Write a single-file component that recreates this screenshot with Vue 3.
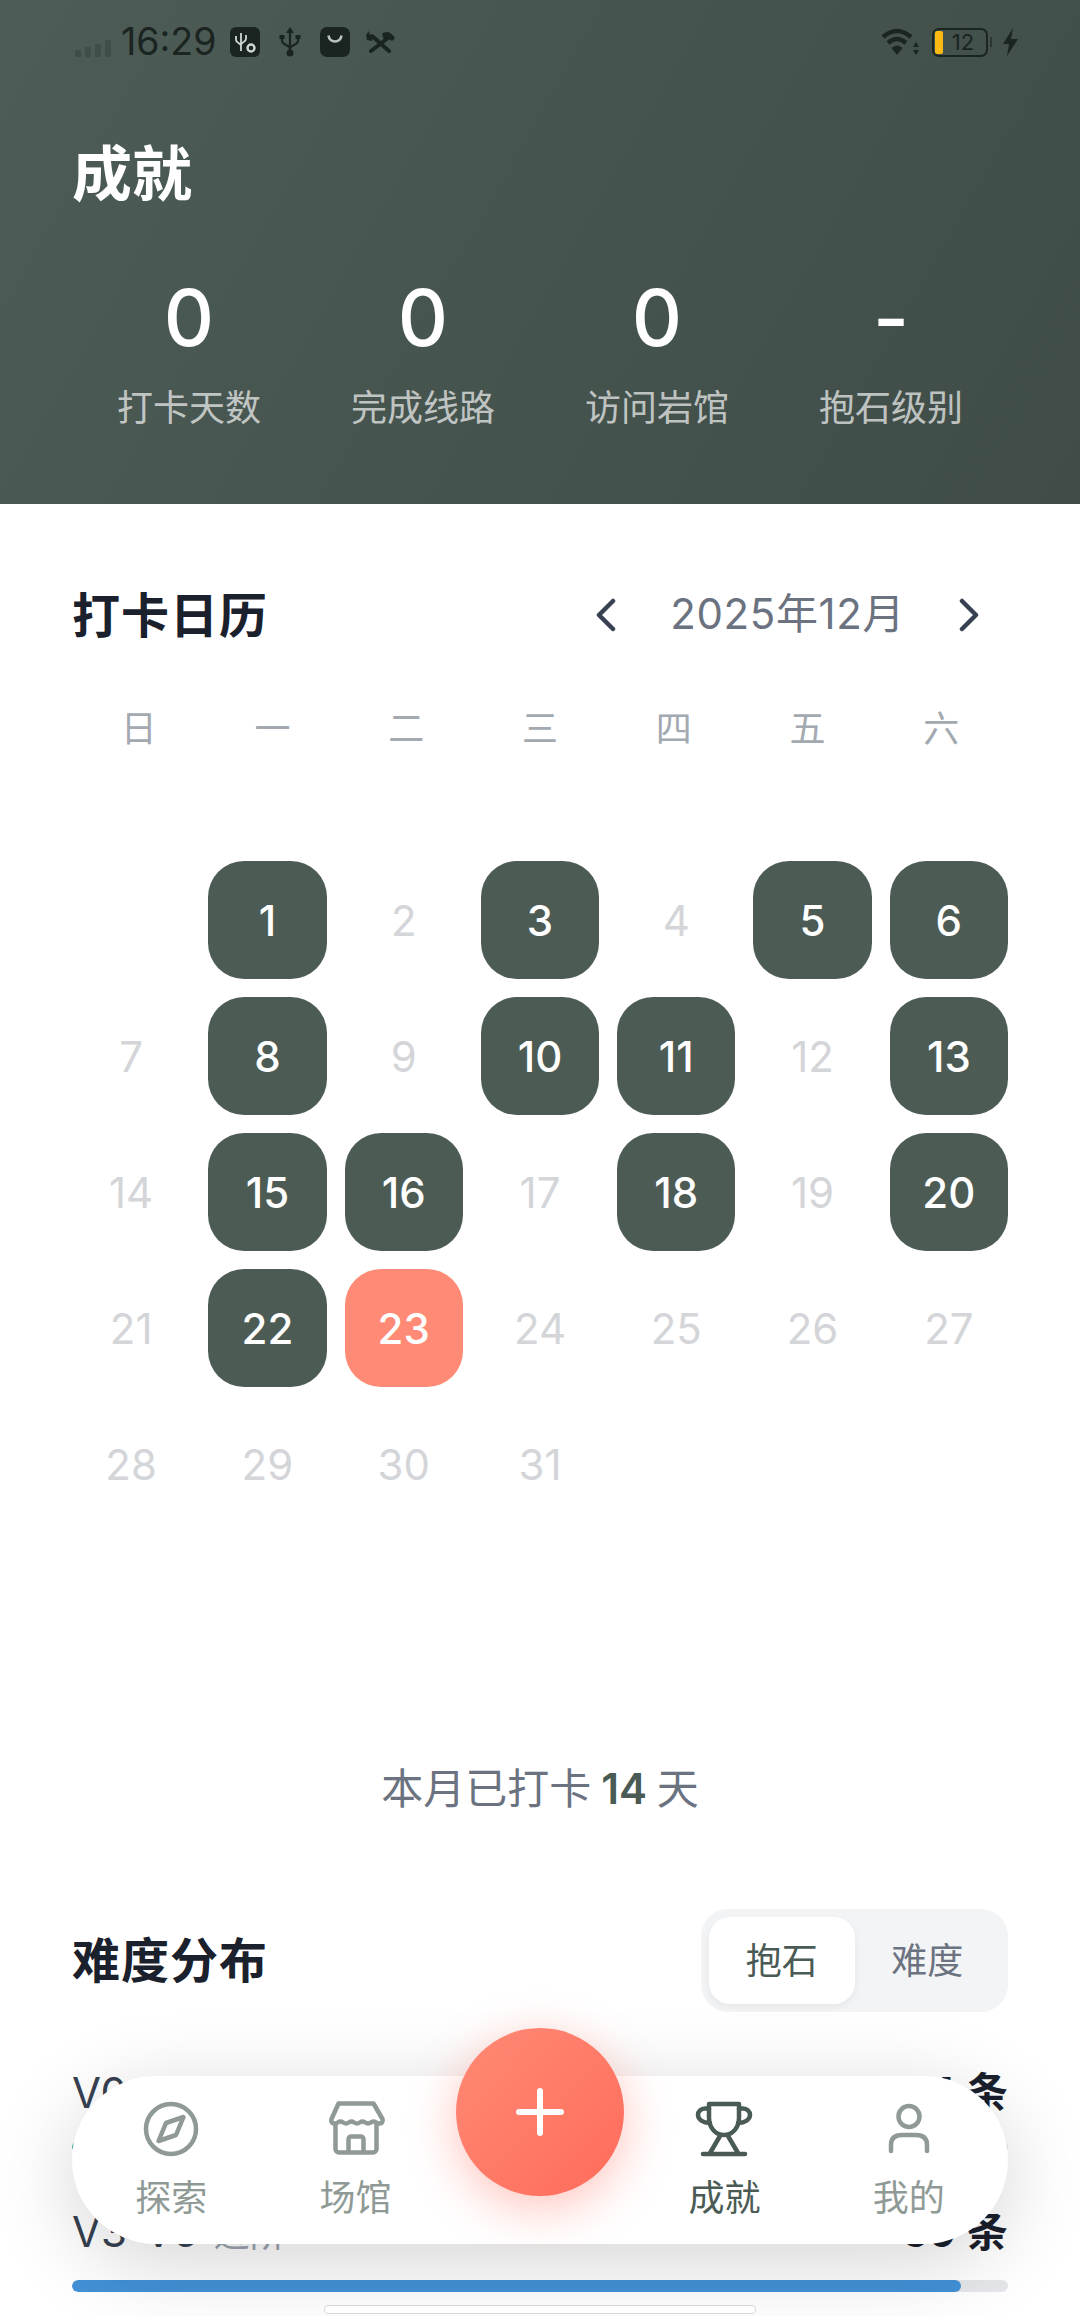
<script setup>
const stats = [
  { value: '0', label: '打卡天数' },
  { value: '0', label: '完成线路' },
  { value: '0', label: '访问岩馆' },
  { value: '-', label: '抱石级别' }
]
const weekdays = ['日', '一', '二', '三', '四', '五', '六']
const checked = [1, 3, 5, 6, 8, 10, 11, 13, 15, 16, 18, 20, 22]
const today = 23
const days = Array.from({ length: 31 }, (_, i) => i + 1)
const grades = [
  { range: 'V0-V2', name: '入门', count: '34 条', width: 40, color: '#38b2a0' },
  { range: 'V3-V5', name: '进阶', count: '59 条', width: 95, color: '#4391d8' }
]
</script>

<template>
  <div class="page">
    <header class="hero">
      <div class="status">
        <svg class="signal" width="36" height="17" viewBox="0 0 36 17">
          <rect x="0" y="10" width="6" height="7" rx="1" />
          <rect x="10" y="7" width="6" height="10" rx="1" />
          <rect x="20" y="4" width="6" height="13" rx="1" />
          <rect x="30" y="0" width="6" height="17" rx="1" />
        </svg>
        <span class="time">16:29</span>
        <svg class="app-box" width="30" height="30" viewBox="0 0 30 30">
          <rect width="30" height="30" rx="6" fill="#1a2421" />
          <path d="M11 6v18M6 9v4c0 3 5 3 5 6M16 8v4c0 3-5 3-5 6" fill="none" stroke="#cfd6d2" stroke-width="1.8" />
          <circle cx="21" cy="21" r="3.5" fill="none" stroke="#cfd6d2" stroke-width="2.4" />
        </svg>
        <svg class="usb" width="22" height="30" viewBox="0 0 22 30">
          <path d="M11 4v21M3 11v3c0 4 8 4 8 8M19 11v3c0 4-8 4-8 8" fill="none" stroke="#1a2421" stroke-width="2.2" />
          <path d="M11 0l4 6H7z" fill="#1a2421" />
          <circle cx="11" cy="26" r="3.5" fill="#1a2421" />
          <rect x="0.5" y="8" width="5" height="4" fill="#1a2421" />
          <rect x="16.5" y="8" width="5" height="4" fill="#1a2421" />
        </svg>
        <svg class="usb" width="30" height="30" viewBox="0 0 30 30">
          <rect width="30" height="30" rx="7" fill="#1a2421" />
          <path d="M8.5 8.5c1 8 12 8 13 0" fill="none" stroke="#b9c2bd" stroke-width="2.6" />
        </svg>
        <svg class="tools" width="30" height="22" viewBox="0 0 30 22">
          <path d="M7 5l17 15M23 7L6 20" fill="none" stroke="#1a2421" stroke-width="4" stroke-linecap="round" />
          <path d="M1 4l3-4 1 4 3 1-1 5-5-1z" fill="#1a2421" />
          <path d="M17 3c4-3 8-3 13 4l-3 3-5-3-3 2z" fill="#1a2421" />
        </svg>
        <span class="status-gap"></span>
        <svg width="38" height="30" viewBox="0 0 38 30">
          <path d="M2 10Q16-2 30 10M7 16Q16 8 25 16" fill="none" stroke="#1a2421" stroke-width="4.5" />
          <path d="M10.5 21Q16 16 21.5 21L16 28z" fill="#1a2421" />
          <path d="M35 15l3 5h-6zM35 28l3-5h-6z" fill="#1a2421" />
        </svg>
        <div class="battery">
          <span class="charge"></span>
          <span class="level">12</span>
        </div>
        <svg class="bolt" width="15" height="28" viewBox="0 0 15 28">
          <path d="M10 0L0 16h6l-2 12L15 11H8z" fill="#1a2421" />
        </svg>
      </div>
      <h1 class="hero-title">成就</h1>
      <div class="stats">
        <div v-for="s in stats" :key="s.label" class="stat">
          <div class="stat-value">{{ s.value }}</div>
          <div class="stat-label">{{ s.label }}</div>
        </div>
      </div>
    </header>

    <main class="content">
      <section class="cal-head">
        <h2 class="section-title">打卡日历</h2>
        <div class="month-nav">
          <svg width="20" height="36" viewBox="0 0 20 36"><path d="M17 4L3 18l14 14" /></svg>
          <span class="month">2025年12月</span>
          <svg width="20" height="36" viewBox="0 0 20 36"><path d="M3 4l14 14L3 32" /></svg>
        </div>
      </section>

      <div class="weekdays">
        <span v-for="w in weekdays" :key="w">{{ w }}</span>
      </div>

      <div class="days">
        <div class="day-blank"></div>
        <div
          v-for="d in days"
          :key="d"
          class="day"
          :class="{ checked: checked.includes(d), today: d === today }">
          {{ d }}
        </div>
      </div>

      <p class="summary">本月已打卡 <b>14</b> 天</p>

      <section class="dist-head">
        <h2 class="section-title">难度分布</h2>
        <div class="toggle">
          <span class="tab active">抱石</span>
          <span class="tab">难度</span>
        </div>
      </section>

      <div v-for="g in grades" :key="g.range" class="grade">
        <div class="grade-row">
          <span class="grade-label">{{ g.range }}<small class="grade-name">{{ g.name }}</small></span>
          <span class="grade-count">{{ g.count }}</span>
        </div>
        <div class="track">
          <div class="fill" :style="{ width: g.width + '%', background: g.color }"></div>
        </div>
      </div>
    </main>

    <nav class="tabbar">
      <div class="nav-item">
        <svg width="60" height="60" viewBox="0 0 60 60">
          <circle cx="30" cy="30" r="25" />
          <path d="M42.5 18L25 24l-7.5 18L35 36z" />
        </svg>
        <span>探索</span>
      </div>
      <div class="nav-item">
        <svg width="60" height="60" viewBox="0 0 60 60">
          <path d="M12.5 4.5H47.5L56.5 20c1 3-1 4.5-3.5 4.5-2.5 0-3.5-2-5.5-2s-3 2-5.5 2-3-2-5.5-2-3 2-5.5 2-3-2-5.5-2-3 2-5.5 2-3-2-5.5-2-3 2-5.5 2c-2.5 0-4.5-1.5-3.5-4.500z" />
          <path d="M9.5 25v25c0 2 1.5 3.5 3.5 3.5h34c2 0 3.5-1.5 3.5-3.5V25" />
          <path d="M22.5 53V41c0-2 1-3.5 3-3.5h9c2 0 3 1.5 3 3.5v12" />
        </svg>
        <span>场馆</span>
      </div>
      <div class="nav-item spacer"></div>
      <div class="nav-item active">
        <svg width="60" height="60" viewBox="0 0 60 60">
          <path d="M15 5h30v14c0 9-6 17-15 17S15 28 15 19z" />
          <path d="M15 9.5H11c-4 0-7 3-7 6.5 0 4.5 5 7.5 12 8M45 9.5h4c4 0 7 3 7 6.5 0 4.5-5 7.5-12 8" />
          <path d="M26 37L16 54M34 37l10 17M9 55h42" />
        </svg>
        <span>成就</span>
      </div>
      <div class="nav-item">
        <svg width="60" height="60" viewBox="0 0 60 60">
          <circle cx="30" cy="17.5" r="10.5" />
          <path d="M12 52v-6c0-7 4-10 11-10h14c7 0 11 3 11 10v6" />
        </svg>
        <span>我的</span>
      </div>
    </nav>

    <button class="fab" type="button">
      <span class="plus"></span>
    </button>

    <div class="gesture"></div>
  </div>
</template>

<style>
html, body {
  margin: 0;
  background: #fff;
}
</style>

<style scoped>
.page {
  position: relative;
  width: 1080px;
  height: 2316px;
  overflow: hidden;
  background: #fff;
  font-family: Inter, "Noto Sans CJK SC", sans-serif;
}

.hero {
  height: 504px;
  box-sizing: border-box;
  padding: 27px 72px 0;
  background: linear-gradient(120deg, #4d5c56 0%, #3f4c47 100%);
  color: #fff;
}

.status {
  display: flex;
  align-items: center;
  height: 30px;
  margin-right: -10px;
  margin-left: 3px;
}

.signal {
  fill: #1a2421;
  opacity: 0.22;
  margin-top: 13px;
  flex: none;
}

.time {
  margin-left: 10px;
  font-size: 37.5px;
  line-height: 30px;
  color: #1a2421;
  width: 97px;
  flex: none;
}

.app-box {
  margin-left: 12px;
  flex: none;
}

.usb {
  margin-left: 19px;
  flex: none;
}

.tools {
  margin-left: 15px;
  flex: none;
}

.status-gap {
  flex: 1;
}

.battery {
  position: relative;
  width: 56px;
  height: 29px;
  margin-left: 13px;
  box-sizing: border-box;
  border: 2.5px solid #1a2421;
  border-radius: 7px;
  display: flex;
  align-items: center;
  justify-content: center;
}

.battery::after {
  content: "";
  position: absolute;
  right: -6px;
  top: 7px;
  width: 2px;
  height: 10px;
  background: #1a2421;
  opacity: 0.6;
}

.charge {
  position: absolute;
  left: 1px;
  top: 1px;
  bottom: 1px;
  width: 8px;
  background: #fdb913;
  border-radius: 2px;
}

.level {
  font-size: 22px;
  color: #1a2421;
  margin-left: 6px;
}

.bolt {
  margin-left: 15px;
}

.hero-title {
  margin: 0;
  margin-top: 86px;
  font-size: 60px;
  line-height: 62px;
  font-weight: 700;
}

.stats {
  display: grid;
  grid-template-columns: repeat(4, 1fr);
  margin-top: 73px;
}

.stat {
  text-align: center;
}

.stat-value {
  font-size: 78px;
  line-height: 80px;
  font-weight: 500;
}

.stat-label {
  margin-top: 30px;
  font-size: 36px;
  line-height: 40px;
  color: rgba(255, 255, 255, 0.68);
}

.content {
  padding: 0 72px;
}

.cal-head {
  display: flex;
  align-items: center;
  justify-content: space-between;
  margin-top: 84px;
  height: 56px;
}

.section-title {
  margin: 0;
  font-size: 48px;
  line-height: 56px;
  font-weight: 700;
  letter-spacing: 1px;
  color: #1a202c;
}

.month-nav {
  display: flex;
  align-items: center;
  gap: 54px;
  margin-right: 29px;
}

.month-nav svg {
  fill: none;
  stroke: #374151;
  stroke-width: 4.5;
  stroke-linecap: round;
  stroke-linejoin: round;
  margin-top: -2px;
}

.month {
  font-size: 42px;
  line-height: 44px;
  letter-spacing: 0.6px;
  color: #6b7280;
  margin-bottom: 4px;
}

.weekdays {
  display: grid;
  grid-template-columns: repeat(7, 1fr);
  margin-top: 63px;
  text-align: center;
  font-size: 36px;
  line-height: 44px;
  color: #a3a9b1;
}

.days {
  display: grid;
  grid-template-columns: repeat(7, 1fr);
  grid-auto-rows: 118px;
  gap: 18px;
  margin-top: 110px;
}

.day {
  display: flex;
  align-items: center;
  justify-content: center;
  font-size: 42px;
  color: #d4d5d8;
  border-radius: 36px;
}

.day.checked {
  background: #4d5b55;
  color: #fff;
  font-weight: 500;
}

.day.today {
  background: #ff8a75;
  color: #fff;
  font-weight: 500;
}

.summary {
  margin: 0;
  margin-top: 241px;
  text-align: center;
  font-size: 42px;
  line-height: 50px;
  word-spacing: -2px;
  color: #6b7280;
}

.summary b {
  font-weight: 600;
  color: #4a5a54;
}

.dist-head {
  display: flex;
  align-items: center;
  justify-content: space-between;
  margin-top: 95px;
}

.toggle {
  display: flex;
  padding: 8px;
  border-radius: 27px;
  background: #f3f4f6;
}

.tab {
  width: 145.5px;
  height: 87px;
  line-height: 89px;
  text-align: center;
  font-size: 36px;
  color: #6b7280;
  border-radius: 21px;
}

.tab.active {
  background: #fff;
  color: #4a5a54;
  box-shadow: 0 3px 9px rgba(0, 0, 0, 0.06);
}

.grade {
  margin-top: 56px;
}

.grade + .grade {
  margin-top: 54px;
}

.grade-row {
  display: flex;
  justify-content: space-between;
  font-size: 42px;
  line-height: 50px;
  color: #374151;
}

.grade-name {
  margin-left: 15px;
  font-size: 36px;
  color: #9ca3af;
}

.grade-count {
  font-weight: 700;
  color: #1a202c;
}

.track {
  height: 12px;
  margin-top: 21px;
  border-radius: 6px;
  background: #e5e7eb;
  overflow: hidden;
}

.fill {
  height: 100%;
  border-radius: 6px;
}

.tabbar {
  position: absolute;
  left: 72px;
  top: 2076px;
  width: 936px;
  height: 168px;
  box-sizing: border-box;
  padding: 0 7px;
  display: grid;
  grid-template-columns: repeat(5, 1fr);
  border-radius: 84px;
  background: #fff;
  box-shadow: 0 18px 84px rgba(0, 0, 0, 0.17);
}

.nav-item {
  display: flex;
  flex-direction: column;
  align-items: center;
  padding-top: 23px;
  font-size: 36px;
  line-height: 44px;
  color: #8f9a96;
}

.nav-item svg {
  fill: none;
  stroke: #8f9a96;
  stroke-width: 4.5;
  stroke-linecap: round;
  stroke-linejoin: round;
  margin-bottom: 17px;
}

.nav-item.active {
  color: #4a5a54;
}

.nav-item.active svg {
  stroke: #4a5a54;
}

.fab {
  position: absolute;
  left: 456px;
  top: 2028px;
  width: 168px;
  height: 168px;
  padding: 0;
  border: none;
  border-radius: 50%;
  background: linear-gradient(135deg, #ff8a75 0%, #ff6b5b 100%);
  box-shadow: 0 12px 48px rgba(255, 107, 91, 0.4);
}

.plus {
  position: absolute;
  left: 60px;
  top: 81px;
  width: 48px;
  height: 6px;
  border-radius: 3px;
  background: #fff;
}

.plus::after {
  content: "";
  position: absolute;
  left: 21px;
  top: -21px;
  width: 6px;
  height: 48px;
  border-radius: 3px;
  background: #fff;
}

.gesture {
  position: absolute;
  left: 324px;
  top: 2305px;
  width: 432px;
  height: 9px;
  box-sizing: border-box;
  border: 1.5px solid #d8d8da;
  border-radius: 4px;
  background: #fff;
}
</style>
